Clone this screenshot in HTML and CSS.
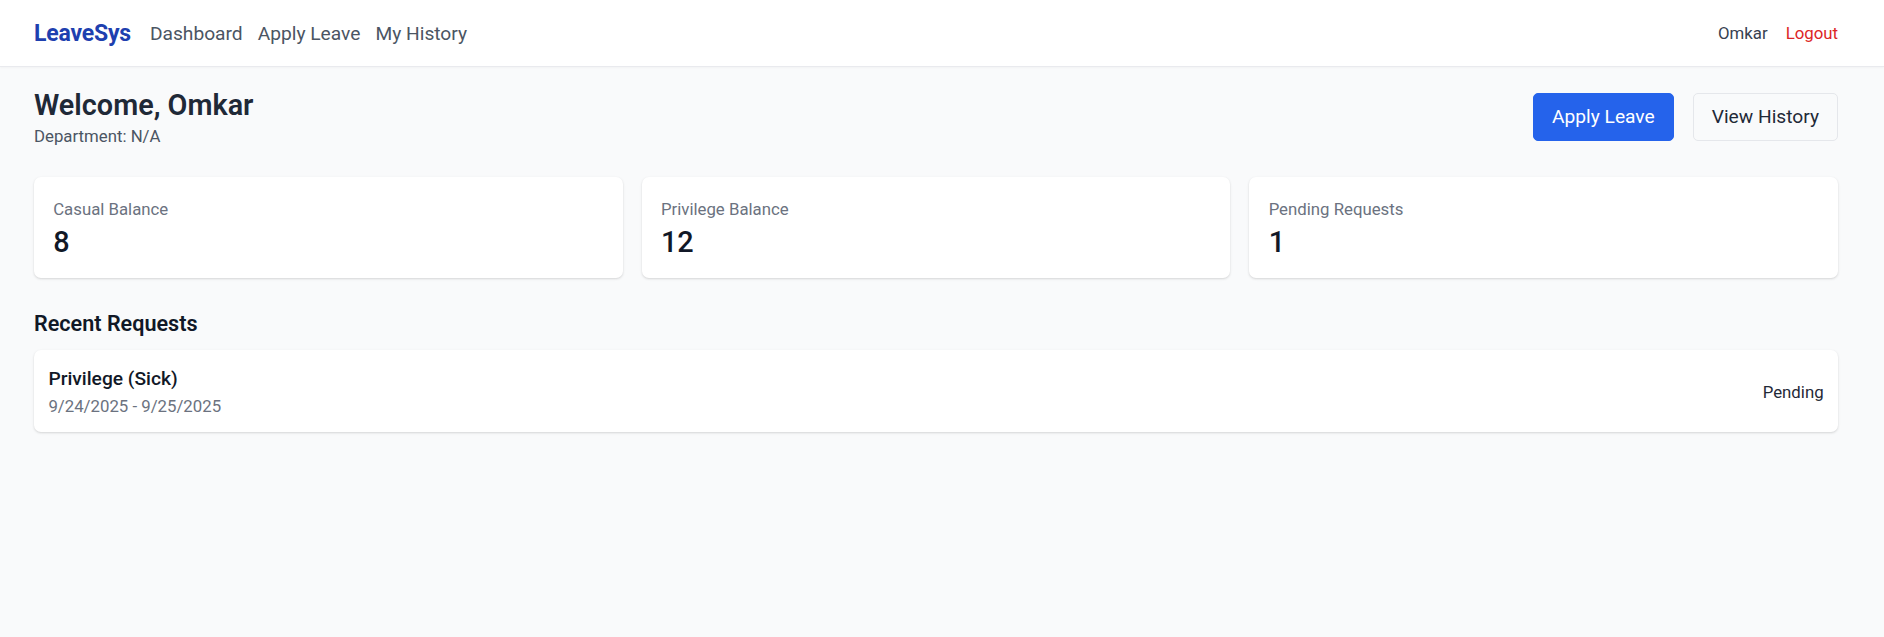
FILE: index.html
```html
<!DOCTYPE html>
<html lang="en">
<head>
<meta charset="utf-8">
<title>LeaveSys</title>
<link rel="stylesheet" href="styles.css">
</head>
<body>
<nav class="nav">
  <div class="nav-left">
    <a class="brand" href="#">LeaveSys</a>
    <div class="nav-links">
      <a href="#">Dashboard</a>
      <a href="#">Apply Leave</a>
      <a href="#">My History</a>
    </div>
  </div>
  <div class="nav-right">
    <span class="user">Omkar</span>
    <a class="logout" href="#">Logout</a>
  </div>
</nav>
<main class="main">
  <div class="header">
    <div>
      <h1 class="welcome">Welcome, Omkar</h1>
      <div class="dept">Department: N/A</div>
    </div>
    <div class="actions">
      <a class="btn btn-primary" href="#">Apply Leave</a>
      <a class="btn btn-secondary" href="#">View History</a>
    </div>
  </div>
  <div class="stats">
    <div class="card">
      <div class="card-label">Casual Balance</div>
      <div class="card-value">8</div>
    </div>
    <div class="card">
      <div class="card-label">Privilege Balance</div>
      <div class="card-value">12</div>
    </div>
    <div class="card">
      <div class="card-label">Pending Requests</div>
      <div class="card-value">1</div>
    </div>
  </div>
  <h2 class="section-title">Recent Requests</h2>
  <div class="request">
    <div>
      <div class="req-title">Privilege (Sick)</div>
      <div class="req-dates">9/24/2025 - 9/25/2025</div>
    </div>
    <div class="req-status">Pending</div>
  </div>
</main>
</body>
</html>
```
FILE: styles.css
```css
* { box-sizing: border-box; }
html, body { margin: 0; padding: 0; }
body {
  font-family: Roboto, "Liberation Sans", sans-serif;
  background: #f9fafb;
  color: #111827;
  min-height: 637px;
}
a { text-decoration: none; }

.nav {
  height: 67px;
  background: #ffffff;
  border-bottom: 1px solid #e9eaee;
  box-shadow: 0 1px 2px rgba(0,0,0,0.03);
  display: flex;
  align-items: center;
  justify-content: space-between;
  padding: 0 46px 0 34px;
}
.nav-left { display: flex; align-items: center; gap: 19px; }
.brand {
  color: #1e40af;
  font-weight: 700;
  font-size: 23px;
  letter-spacing: -0.2px;
}
.nav-links { display: flex; gap: 15px; }
.nav-links a { color: #4b5563; font-size: 19.2px; }
.nav-right { display: flex; align-items: center; gap: 18px; font-size: 16.8px; }
.user { color: #374151; }
.logout { color: #dc2626; }

.main { padding: 19px 46px 0 34px; }
.header {
  display: flex;
  justify-content: space-between;
  align-items: center;
}
.welcome {
  margin: 0;
  font-size: 28.8px;
  line-height: 38.4px;
  font-weight: 600;
  color: #1f2937;
}
.dept { font-size: 16.8px; line-height: 24px; color: #4b5563; }
.actions { display: flex; gap: 19px; }
.btn {
  display: inline-block;
  font-size: 19.2px;
  line-height: 24px;
  padding: 11px 18px;
  border-radius: 5px;
}
.btn-primary { background: #2563eb; color: #ffffff; border: 1px solid #2563eb; }
.btn-secondary { background: #f9fafb; color: #1f2937; border: 1px solid #e5e7eb; }

.stats {
  margin-top: 28.8px;
  display: grid;
  grid-template-columns: repeat(3, 1fr);
  gap: 19.2px;
}
.card {
  background: #ffffff;
  border-radius: 7px;
  box-shadow: 0 1px 3px rgba(0,0,0,0.10), 0 1px 2px rgba(0,0,0,0.06);
  padding: 20px 19.2px 16.4px;
}
.card-label { font-size: 16.8px; line-height: 24px; color: #6b7280; }
.card-value { margin-top: 2px; font-size: 28.8px; line-height: 38.4px; font-weight: 500; color: #111827; }

.section-title {
  margin: 29px 0 9.6px;
  font-size: 21.6px;
  line-height: 33.6px;
  font-weight: 600;
  color: #111827;
}
.request {
  background: #ffffff;
  border-radius: 7px;
  box-shadow: 0 1px 3px rgba(0,0,0,0.10), 0 1px 2px rgba(0,0,0,0.06);
  padding: 15px 14.4px 13.8px;
  display: flex;
  justify-content: space-between;
  align-items: center;
}
.req-title { font-size: 19.2px; line-height: 28.8px; font-weight: 500; color: #111827; }
.req-dates { font-size: 16.8px; line-height: 24px; color: #6b7280; }
.req-status { font-size: 16.8px; color: #1f2937; }
```
